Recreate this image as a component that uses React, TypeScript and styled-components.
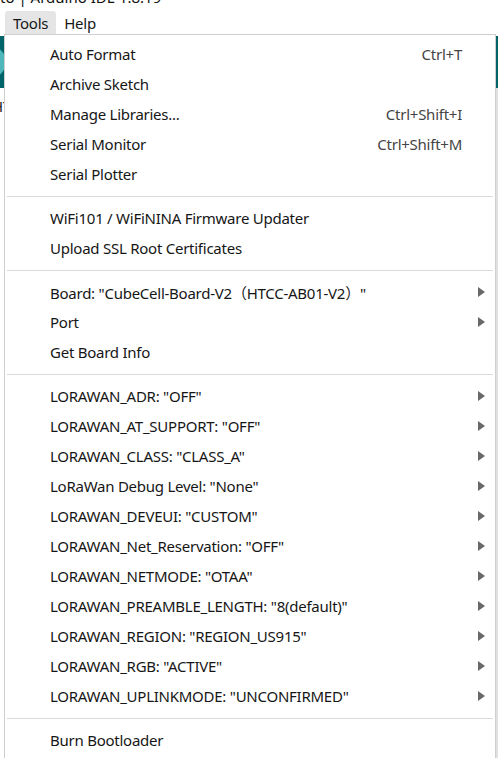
import React from "react";
import styled, { createGlobalStyle } from "styled-components";

const GlobalStyle = createGlobalStyle`
  html, body { margin: 0; padding: 0; background: #ffffff; }
  body { font-family: "Noto Sans", "Open Sans", sans-serif; }
`;

const Window = styled.div`
  position: relative;
  width: 498px;
  height: 758px;
  overflow: hidden;
  background: #ffffff;
  display: flex;
  flex-direction: column;
`;

const TitleBar = styled.div`
  height: 11px;
  box-sizing: border-box;
  padding-bottom: 6px;
  overflow: hidden;
  display: flex;
  align-items: flex-end;
  font-size: 15px;
  line-height: 1;
  color: #111;
  white-space: nowrap;
`;

const MenuBar = styled.div`
  height: 23px;
  display: flex;
  align-items: stretch;
  padding-left: 5px;
  letter-spacing: -0.25px;
`;

const MenuBarItem = styled.div<{ $active?: boolean }>`
  display: flex;
  align-items: center;
  padding: 0 8px;
  font-size: 15px;
  color: #161616;
  border-radius: 3px 3px 0 0;
  background: ${(p) => (p.$active ? "#e5e5e5" : "transparent")};
`;

const Toolbar = styled.div`
  margin-top: 2px;
  height: 52px;
  background: #006468;
  display: flex;
  align-items: center;
`;

const ToolButton = styled.div`
  width: 32px;
  height: 32px;
  margin-left: -26px;
  border-radius: 50%;
  background: #4db7bb;
`;

const Editor = styled.div`
  flex: 1;
  display: flex;
`;

const EditorBody = styled.div`
  flex: 1;
  padding-top: 8px;
  font-size: 15px;
  color: #222;
  margin-left: -8px;
`;

const ScrollStrip = styled.div`
  width: 3px;
  background: #e0e0e0;
  border-left: 1px solid #9a9a9a;
`;

const Dropdown = styled.div`
  position: absolute;
  top: 34px;
  left: 4px;
  width: 492px;
  box-sizing: border-box;
  background: #ffffff;
  border: 1px solid #cfcfcf;
  padding: 4px 0;
  font-size: 15px;
  letter-spacing: -0.25px;
  color: #161616;
`;

const Row = styled.div`
  height: 30px;
  display: flex;
  align-items: center;
  padding: 0 10px 0 45px;
  white-space: nowrap;
`;

const Label = styled.span`
  flex: 1;
`;

const Shortcut = styled.span`
  color: #444;
`;

const ArrowSlot = styled.span`
  width: 23px;
  display: flex;
  justify-content: flex-end;
  align-items: center;
`;

const Arrow = styled.span`
  width: 0;
  height: 0;
  border-top: 5px solid transparent;
  border-bottom: 5px solid transparent;
  border-left: 7px solid #686868;
`;

const Separator = styled.div`
  height: 14px;
  display: flex;
  align-items: center;
  padding: 0 2px;
  &::after {
    content: "";
    flex: 1;
    height: 1px;
    background: #dadada;
  }
`;

const Cjk = styled.span`
  font-family: "Noto Sans CJK SC", sans-serif;
`;

type Item =
  | { kind: "sep" }
  | { kind: "item"; label: React.ReactNode; shortcut?: string; sub?: boolean };

const items: Item[] = [
  { kind: "item", label: "Auto Format", shortcut: "Ctrl+T" },
  { kind: "item", label: "Archive Sketch" },
  { kind: "item", label: "Manage Libraries...", shortcut: "Ctrl+Shift+I" },
  { kind: "item", label: "Serial Monitor", shortcut: "Ctrl+Shift+M" },
  { kind: "item", label: "Serial Plotter" },
  { kind: "sep" },
  { kind: "item", label: "WiFi101 / WiFiNINA Firmware Updater" },
  { kind: "item", label: "Upload SSL Root Certificates" },
  { kind: "sep" },
  {
    kind: "item",
    label: (
      <>
        Board: "CubeCell-Board-V2<Cjk>（</Cjk>HTCC-AB01-V2<Cjk>）</Cjk>"
      </>
    ),
    sub: true,
  },
  { kind: "item", label: "Port", sub: true },
  { kind: "item", label: "Get Board Info" },
  { kind: "sep" },
  { kind: "item", label: 'LORAWAN_ADR: "OFF"', sub: true },
  { kind: "item", label: 'LORAWAN_AT_SUPPORT: "OFF"', sub: true },
  { kind: "item", label: 'LORAWAN_CLASS: "CLASS_A"', sub: true },
  { kind: "item", label: 'LoRaWan Debug Level: "None"', sub: true },
  { kind: "item", label: 'LORAWAN_DEVEUI: "CUSTOM"', sub: true },
  { kind: "item", label: 'LORAWAN_Net_Reservation: "OFF"', sub: true },
  { kind: "item", label: 'LORAWAN_NETMODE: "OTAA"', sub: true },
  { kind: "item", label: 'LORAWAN_PREAMBLE_LENGTH: "8(default)"', sub: true },
  { kind: "item", label: 'LORAWAN_REGION: "REGION_US915"', sub: true },
  { kind: "item", label: 'LORAWAN_RGB: "ACTIVE"', sub: true },
  { kind: "item", label: 'LORAWAN_UPLINKMODE: "UNCONFIRMED"', sub: true },
  { kind: "sep" },
  { kind: "item", label: "Burn Bootloader" },
];

export default function App() {
  return (
    <>
      <GlobalStyle />
      <Window>
        <TitleBar>to | Arduino IDE 1.8.19</TitleBar>
        <MenuBar>
          <MenuBarItem $active>Tools</MenuBarItem>
          <MenuBarItem>Help</MenuBarItem>
        </MenuBar>
        <Toolbar>
          <ToolButton />
        </Toolbar>
        <Editor>
          <EditorBody>HTCC</EditorBody>
          <ScrollStrip />
        </Editor>
        <Dropdown>
          {items.map((it, i) =>
            it.kind === "sep" ? (
              <Separator key={i} />
            ) : (
              <Row key={i}>
                <Label>{it.label}</Label>
                {it.shortcut && <Shortcut>{it.shortcut}</Shortcut>}
                <ArrowSlot>{it.sub && <Arrow />}</ArrowSlot>
              </Row>
            )
          )}
        </Dropdown>
      </Window>
    </>
  );
}
